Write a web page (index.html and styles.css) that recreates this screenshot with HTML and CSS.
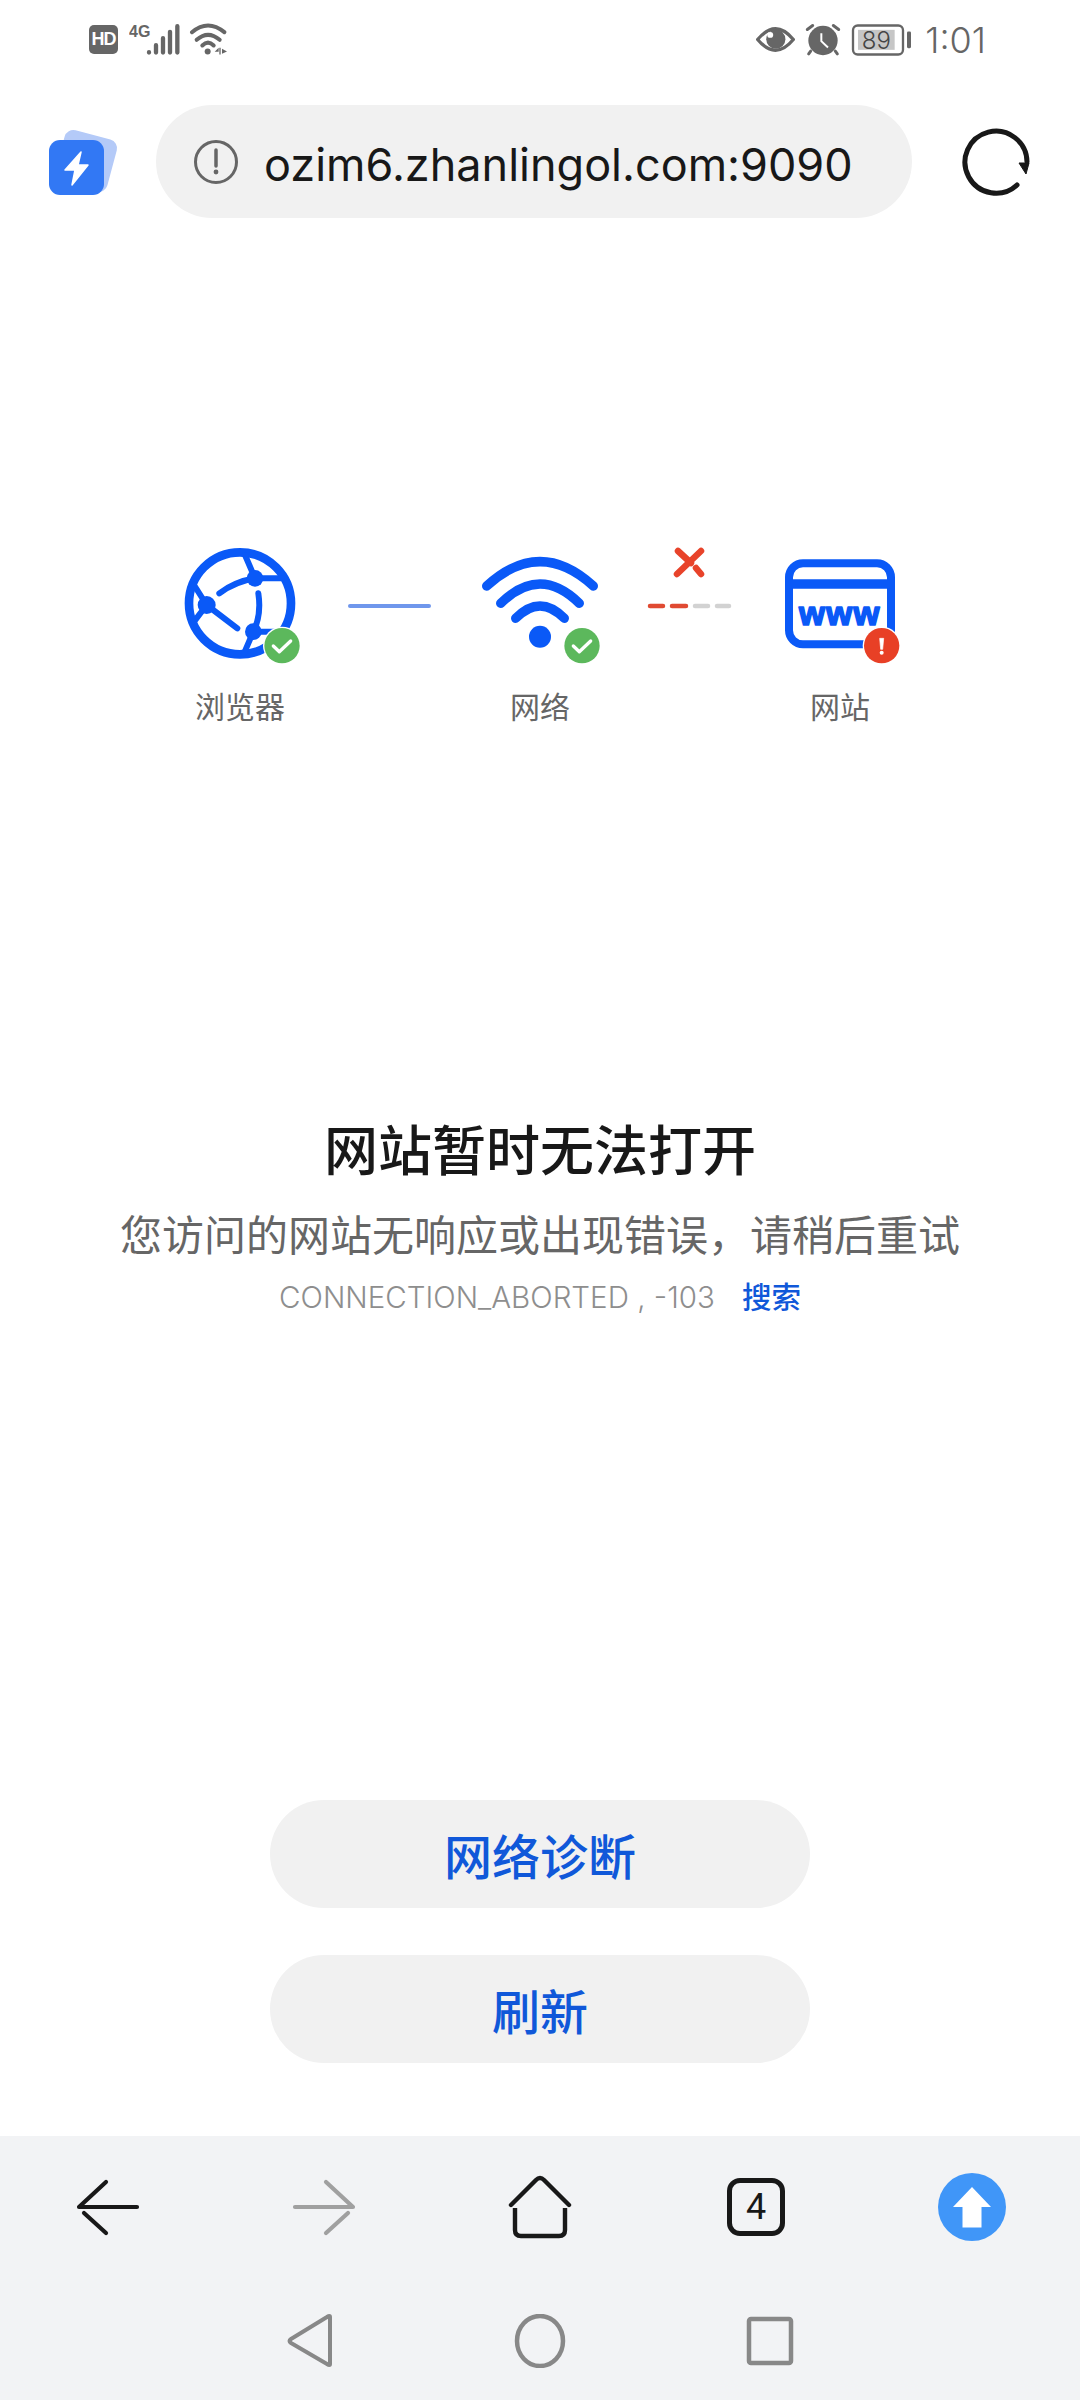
FILE: index.html
```html
<!DOCTYPE html>
<html>
<head>
    <meta charset="utf-8">
    <title>网站暂时无法打开</title>
    <link rel="stylesheet" href="styles.css">
</head>
<body>

<div class="status-bar">
    <div class="status-left">
        <span class="hd">HD</span>
        <svg class="signal" viewBox="207 64.5 156 108">
            <text class="signal-type" x="207" y="110">4G</text>
            <g fill="none" stroke="#666" stroke-width="13" stroke-linecap="round">
                <path d="M267 155v1M288 134v22M309 113v43M330 94v62M352 77v79"/>
            </g>
        </svg>
        <svg class="wifi-small" viewBox="384 64.5 114 108">
            <g fill="none" stroke="#666" stroke-width="12" stroke-linecap="round">
                <path d="M393 95Q441 55 490 95"/>
                <path d="M407 118Q441 88 476 118"/>
                <path d="M424 135Q441 118 458 135"/>
            </g>
            <circle cx="440" cy="153" r="9" fill="#666"/>
            <path d="M461 154l12-12v12zM475 142h4v20h-4zM483 145l15 8-15 7z" fill="#666"/>
        </svg>
    </div>
    <div class="status-right">
        <svg class="eye" viewBox="55 64.5 118 108">
            <path d="M60 117Q114 52 168 117Q114 182 60 117Z" fill="none" stroke="#666" stroke-width="10" stroke-linejoin="round"/>
            <circle cx="115" cy="116" r="29" fill="#666"/>
            <circle cx="98" cy="103" r="9" fill="#fff"/>
        </svg>
        <svg class="alarm" viewBox="198 64.5 114 108">
            <circle cx="255" cy="120" r="44" fill="#666"/>
            <path d="M250 98V122L270 141" fill="none" stroke="#fff" stroke-width="6"/>
            <path d="M208 87L224 75M286 75L302 87M218 152L212 160M292 152L298 160" fill="none" stroke="#666" stroke-width="9" stroke-linecap="round"/>
        </svg>
        <svg class="battery" viewBox="339 64.5 183 108">
            <rect x="345" y="75" width="150" height="87" rx="14" fill="none" stroke="#666" stroke-width="7"/>
            <rect x="360" y="88" width="110" height="60" fill="#c6c6c6"/>
            <rect x="507" y="93" width="12" height="50" rx="4" fill="#666"/>
            <text class="battery-text" x="415" y="144">89</text>
        </svg>
        <span class="time">1:01</span>
    </div>
</div>

<div class="address-row">
    <svg class="logo" viewBox="0 0 80 72">
        <rect x="14" y="10" width="54" height="54" rx="9" fill="#b4caf8" transform="rotate(15 41 37)"/>
        <rect x="4" y="16" width="55" height="55" rx="11" fill="#3278f4"/>
        <path d="M36 28L20 46H30L27 61L43 41H33Z" fill="#fff" stroke="#fff" stroke-width="1.5" stroke-linejoin="round"/>
    </svg>
    <div class="address-pill">
        <svg class="info-icon" viewBox="0 0 46 46">
            <circle cx="23" cy="23" r="20.5" fill="none" stroke="#666" stroke-width="3"/>
            <path d="M23 11V27" stroke="#666" stroke-width="3.5" stroke-linecap="round"/>
            <circle cx="23" cy="33" r="2.4" fill="#666"/>
        </svg>
        <span class="address-text">ozim6.zhanlingol.com:9090</span>
    </div>
    <svg class="reload" viewBox="-36 -36 72 72">
        <path d="M21 23A31 31 0 1 1 31 0" fill="none" stroke="#181818" stroke-width="5" stroke-linecap="round"/>
        <path d="M23 1H33L30 12Z" fill="#181818" stroke="#181818" stroke-width="1" stroke-linejoin="round"/>
    </svg>
</div>

<div class="diagram">
    <div class="step">
        <svg class="step-icon" viewBox="0 0 420 420">
            <circle cx="210" cy="220" r="153" fill="none" stroke="#0a59f7" stroke-width="26"/>
            <g fill="none" stroke="#0a59f7" stroke-width="18" stroke-linecap="round">
                <path d="M255 145L225 75M255 145H335M148 190Q195 155 255 145"/>
                <path d="M110 225L72 165M110 225L72 275M110 225L202 295"/>
                <path d="M250 305Q275 255 265 190M250 305H335M250 305L222 370"/>
            </g>
            <circle cx="255" cy="145" r="25" fill="#0a59f7"/>
            <circle cx="110" cy="225" r="27" fill="#0a59f7"/>
            <circle cx="250" cy="305" r="25" fill="#0a59f7"/>
            <circle cx="336" cy="347" r="57" fill="#fff"/>
            <circle cx="336" cy="347" r="53" fill="#5cb85c"/>
            <path d="M310 348L328 365L362 333" fill="none" stroke="#fff" stroke-width="10" stroke-linecap="round" stroke-linejoin="round"/>
        </svg>
        <div class="step-label">浏览器</div>
    </div>
    <svg class="connector" viewBox="0 0 120 140">
        <path d="M20 76H99" stroke="#6f97ec" stroke-width="4" stroke-linecap="round"/>
    </svg>
    <div class="step">
        <svg class="step-icon" viewBox="0 0 420 420">
            <g fill="none" stroke="#0a59f7" stroke-width="28" stroke-linecap="round">
                <path d="M50 168Q210 22 370 168"/>
                <path d="M92 220Q210 104 328 220"/>
                <path d="M137 265Q210 191 283 265"/>
            </g>
            <circle cx="210" cy="320" r="33" fill="#0a59f7"/>
            <circle cx="336" cy="347" r="57" fill="#fff"/>
            <circle cx="336" cy="347" r="53" fill="#5cb85c"/>
            <path d="M310 348L328 365L362 333" fill="none" stroke="#fff" stroke-width="10" stroke-linecap="round" stroke-linejoin="round"/>
        </svg>
        <div class="step-label">网络</div>
    </div>
    <svg class="connector" viewBox="0 0 120 140">
        <path d="M20 76H33M42 76H56" stroke="#e04a32" stroke-width="4.5" stroke-linecap="round"/>
        <path d="M65 76H78M87 76H99" stroke="#d2d2d2" stroke-width="4.5" stroke-linecap="round"/>
        <path d="M71 21L47 44M48 21L61 33M66 38L71 44" fill="none" stroke="#e8432a" stroke-width="6.5" stroke-linecap="round"/>
    </svg>
    <div class="step">
        <svg class="step-icon" viewBox="0 0 420 420">
            <rect x="57" y="100" width="306" height="243" rx="42" fill="none" stroke="#0a59f7" stroke-width="24"/>
            <path d="M57 162H363" stroke="#0a59f7" stroke-width="28"/>
            <text class="www" x="210" y="284">www</text>
            <circle cx="335" cy="347" r="57" fill="#fff"/>
            <circle cx="335" cy="347" r="53" fill="#e84026"/>
            <path d="M329 325H341L338 358H332Z" fill="#fff" stroke="#fff" stroke-width="2" stroke-linejoin="round"/>
            <circle cx="335" cy="368" r="6" fill="#fff"/>
        </svg>
        <div class="step-label">网站</div>
    </div>
</div>

<h1 class="error-title">网站暂时无法打开</h1>
<p class="error-desc">您访问的网站无响应或出现错误，请稍后重试</p>
<p class="error-code">CONNECTION_ABORTED , -103<a class="search-link">搜索</a></p>

<div class="actions">
    <button class="action-btn">网络诊断</button>
    <button class="action-btn">刷新</button>
</div>

<div class="toolbar">
    <div class="tool">
        <svg class="tool-icon" viewBox="-34 -34 68 68">
            <path d="M29 0H-29L-2 -25M-24 6L-2 26" fill="none" stroke="#181818" stroke-width="4.2" stroke-linecap="round" stroke-linejoin="round"/>
        </svg>
    </div>
    <div class="tool">
        <svg class="tool-icon" viewBox="-34 -34 68 68">
            <path d="M-29 0H29L2 -25M24 6L2 26" fill="none" stroke="#a0a0a0" stroke-width="4.2" stroke-linecap="round" stroke-linejoin="round"/>
        </svg>
    </div>
    <div class="tool">
        <svg class="tool-icon" viewBox="-34 -34 68 68">
            <path d="M-29 -2L-4 -27Q0 -31 4 -27L29 -2" fill="none" stroke="#181818" stroke-width="4.4" stroke-linecap="round"/>
            <path d="M-25 1V23Q-25 29 -19 29H19Q25 29 25 23V1" fill="none" stroke="#181818" stroke-width="4.4"/>
        </svg>
    </div>
    <div class="tool">
        <div class="tab-count">4</div>
    </div>
    <div class="tool">
        <svg class="tool-icon" viewBox="-34 -34 68 68">
            <circle r="34" fill="#4096f8"/>
            <path d="M0 -20L19 0H9.5V20.5H-9.5V0H-19Z" fill="#fff"/>
        </svg>
    </div>
</div>

<div class="nav-bar">
    <svg class="nav-icon" viewBox="0 0 54 54">
        <path d="M47 3V50Q47 52 44 50L8 29Q5 27 8 25L44 3Q47 1 47 3Z" fill="none" stroke="#888" stroke-width="4" stroke-linejoin="round"/>
    </svg>
    <svg class="nav-icon" viewBox="0 0 54 54">
        <ellipse cx="27" cy="27" rx="23" ry="25" fill="none" stroke="#888" stroke-width="4.5"/>
    </svg>
    <svg class="nav-icon" viewBox="0 0 54 54">
        <rect x="6" y="5" width="42" height="44" rx="2" fill="none" stroke="#888" stroke-width="4.5"/>
    </svg>
</div>

</body>
</html>
```

FILE: styles.css
```css
html, body {
    margin: 0;
    padding: 0;
}

body {
    width: 1080px;
    height: 2400px;
    overflow: hidden;
    display: flex;
    flex-direction: column;
    background-color: #FFF;
    font-family: "Inter", "Noto Sans CJK SC", sans-serif;
    color: #181818;
}

/* status bar */
.status-bar {
    height: 79px;
    flex: none;
    display: flex;
    align-items: center;
    justify-content: space-between;
    padding: 0 94px 0 89px;
}

.status-left, .status-right {
    display: flex;
    align-items: center;
}

.hd {
    width: 29px;
    height: 29px;
    border-radius: 5px;
    background-color: #666;
    color: #FFF;
    font-family: "Liberation Sans", sans-serif;
    font-size: 18px;
    font-weight: 700;
    letter-spacing: -1px;
    line-height: 29px;
    text-align: center;
}

.signal {
    width: 52px;
    height: 36px;
    margin-left: 11px;
}

.signal-type {
    font-family: "Liberation Sans", sans-serif;
    font-size: 48px;
    font-weight: 700;
    fill: #666;
}

.wifi-small {
    width: 38px;
    height: 36px;
    margin-left: 8px;
}

.eye {
    width: 39px;
    height: 36px;
}

.alarm {
    width: 38px;
    height: 36px;
    margin-left: 9px;
}

.battery {
    width: 61px;
    height: 36px;
    margin-left: 9px;
}

.battery-text {
    font-family: "Inter", sans-serif;
    font-size: 72px;
    font-weight: 300;
    text-anchor: middle;
    fill: #444;
}

.time {
    margin-left: 13px;
    font-size: 36px;
    font-weight: 300;
    line-height: 40px;
    color: #666;
}

/* address row */
.address-row {
    height: 113px;
    margin-top: 26px;
    flex: none;
    display: flex;
    align-items: center;
    padding-left: 45px;
}

.logo {
    width: 80px;
    height: 72px;
    margin-top: -4px;
}

.address-pill {
    width: 756px;
    height: 113px;
    margin-left: 31px;
    display: flex;
    align-items: center;
    padding-left: 37px;
    box-sizing: border-box;
    border-radius: 57px;
    background-color: #F1F1F1;
}

.info-icon {
    width: 46px;
    height: 46px;
}

.address-text {
    margin-left: 25px;
    padding-top: 5px;
    font-size: 45px;
    white-space: nowrap;
}

.reload {
    width: 72px;
    height: 72px;
    margin-left: 48px;
}

/* connection diagram */
.diagram {
    margin-top: 312px;
    display: flex;
    justify-content: center;
    align-items: flex-start;
}

.step {
    width: 180px;
    text-align: center;
}

.step-icon {
    display: block;
    width: 140px;
    height: 140px;
    margin: 0 auto;
}

.step-label {
    margin-top: 17px;
    font-size: 30px;
    line-height: 40px;
    color: #666;
}

.connector {
    width: 120px;
    height: 140px;
}

.www {
    font-family: "Liberation Sans", sans-serif;
    font-size: 100px;
    font-weight: 700;
    letter-spacing: 4px;
    text-anchor: middle;
    fill: #0a59f7;
    stroke: #0a59f7;
    stroke-width: 5px;
    stroke-linejoin: round;
}

/* error text */
.error-title {
    margin: 390px 0 0;
    font-size: 54px;
    font-weight: 500;
    line-height: 70px;
    text-align: center;
}

.error-desc {
    margin: 21px 0 0;
    font-size: 42px;
    line-height: 56px;
    color: #666;
    text-align: center;
}

.error-code {
    margin: 13px 0 0;
    font-size: 29.5px;
    font-weight: 300;
    line-height: 40px;
    color: #8e8e8e;
    text-align: center;
}

.search-link {
    margin-left: 27px;
    font-weight: 500;
    color: #1058d9;
}

/* buttons */
.actions {
    margin-top: auto;
    margin-bottom: 73px;
    display: flex;
    flex-direction: column;
    align-items: center;
    gap: 47px;
}

.action-btn {
    width: 540px;
    height: 108px;
    border: none;
    border-radius: 54px;
    background-color: #F1F1F1;
    color: #1058d9;
    font-family: inherit;
    font-size: 48px;
    font-weight: 500;
}

/* bottom toolbar */
.toolbar {
    height: 142px;
    flex: none;
    display: grid;
    grid-template-columns: repeat(5, 216px);
    background-color: #F2F3F5;
}

.tool {
    display: flex;
    align-items: center;
    justify-content: center;
}

.tool-icon {
    width: 68px;
    height: 68px;
}

.tab-count {
    width: 58px;
    height: 58px;
    box-sizing: border-box;
    border: 5px solid #181818;
    border-radius: 13px;
    font-family: "Roboto", sans-serif;
    font-size: 36px;
    line-height: 48px;
    text-align: center;
}

.nav-bar {
    height: 122px;
    flex: none;
    box-sizing: border-box;
    padding-top: 36px;
    display: flex;
    justify-content: center;
    gap: 176px;
    background-color: #F2F3F5;
}

.nav-icon {
    width: 54px;
    height: 54px;
}
```
